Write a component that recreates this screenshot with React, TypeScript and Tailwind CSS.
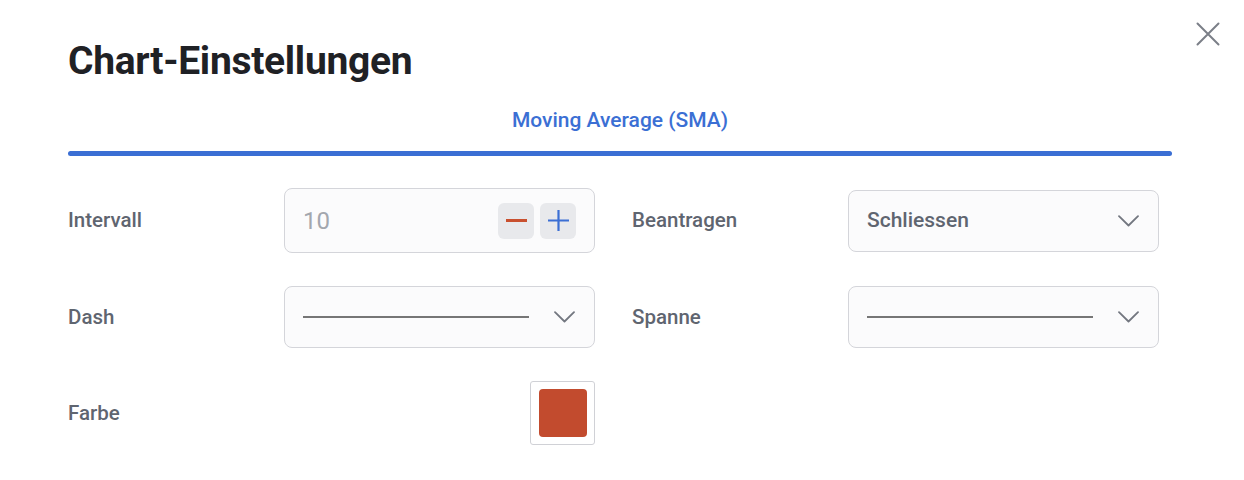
import React from 'react';

const ChevronDown = () => (
  <svg width="21" height="12" viewBox="0 0 21 12" fill="none" className="text-[#737780]">
    <path d="M1 1.2 L10.5 10.5 L20 1.2" stroke="currentColor" strokeWidth="1.8" strokeLinecap="round" strokeLinejoin="round" />
  </svg>
);

const Label: React.FC<{ children: React.ReactNode }> = ({ children }) => (
  <div className="text-[20.5px] font-medium text-[#5f6570]">{children}</div>
);

const LineSelect = () => (
  <div className="flex items-center h-[62px] rounded-lg border border-[#d4d5da] bg-[#fbfbfc] pl-[18px] pr-[19px]">
    <div className="w-[226px] h-[2px] bg-[#767676]" />
    <div className="ml-auto">
      <ChevronDown />
    </div>
  </div>
);

export default function App() {
  return (
    <div className="relative w-[1244px] h-[480px] bg-white pl-[68px] pr-[72px] pt-[37px] font-['Roboto',sans-serif]">
      <button className="absolute right-[24px] top-[22px] text-[#7b7f88]">
        <svg width="24" height="24" viewBox="0 0 24 24" fill="none">
          <path d="M1.5 1.5 L22.5 22.5 M22.5 1.5 L1.5 22.5" stroke="currentColor" strokeWidth="2" strokeLinecap="round" />
        </svg>
      </button>

      <h1 className="text-[39px] leading-[48px] font-bold tracking-[-0.3px] text-[#1f2125]">Chart-Einstellungen</h1>

      {/* Tab */}
      <div className="mt-[21px] flex flex-col items-center">
        <div className="text-[21px] leading-[28px] font-medium text-[#3b6fd4]">Moving Average (SMA)</div>
        <div className="mt-[17px] w-full h-[5px] rounded-full bg-[#3b6fd4]" />
      </div>

      {/* Settings grid */}
      <div className="mt-[32px] grid grid-cols-[216px_311px_253px_311px] gap-y-[33px] items-center">
        <Label>Intervall</Label>
        <div className="flex items-center h-[65px] rounded-lg border border-[#d4d5da] bg-[#fbfbfc] pl-[18px] pr-[18px]">
          <span className="text-[24px] text-[#a3a7ae]">10</span>
          <div className="ml-auto flex gap-[6px]">
            <button className="w-[36px] h-[36px] rounded-md bg-[#e8e9ec] flex items-center justify-center">
              <div className="w-[21px] h-[2.5px] bg-[#c9502f]" />
            </button>
            <button className="w-[36px] h-[36px] rounded-md bg-[#e8e9ec] flex items-center justify-center">
              <svg width="21" height="21" viewBox="0 0 21 21">
                <path d="M10.5 0 V21 M0 10.5 H21" stroke="#3b6fd4" strokeWidth="2.2" />
              </svg>
            </button>
          </div>
        </div>
        <div className="pl-[37px]">
          <Label>Beantragen</Label>
        </div>
        <div className="flex items-center h-[62px] rounded-lg border border-[#d4d5da] bg-[#fbfbfc] pl-[18px] pr-[19px]">
          <span className="text-[21px] font-medium text-[#5f6570]">Schliessen</span>
          <div className="ml-auto">
            <ChevronDown />
          </div>
        </div>

        <Label>Dash</Label>
        <LineSelect />
        <div className="pl-[37px]">
          <Label>Spanne</Label>
        </div>
        <LineSelect />

        <Label>Farbe</Label>
        <div className="flex justify-end">
          <div className="w-[65px] h-[64px] rounded-[3px] border border-[#d0d1d6] flex items-center justify-center">
            <div className="w-[48px] h-[48px] rounded-[4px] bg-[#c24b2e]" />
          </div>
        </div>
      </div>
    </div>
  );
}
